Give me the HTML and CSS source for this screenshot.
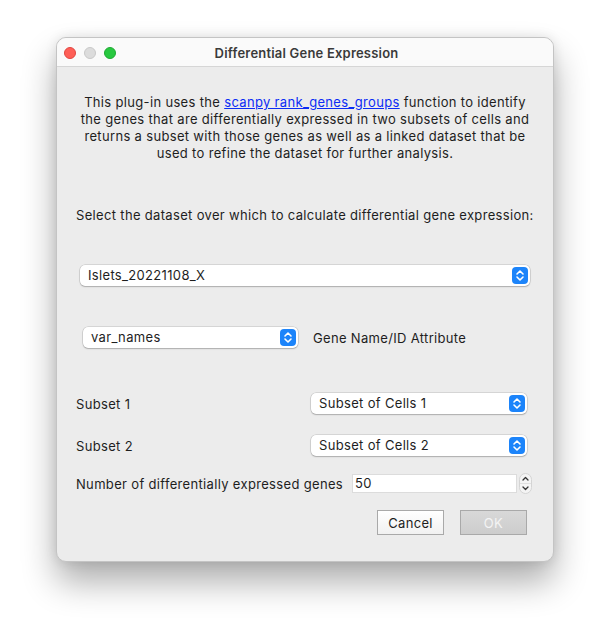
FILE: index.html
```html
<!DOCTYPE html>
<html>
<head>
<meta charset="utf-8">
<link rel="stylesheet" href="styles.css">
</head>
<body>
<div class="desktop">
<div class="window">
  <div class="titlebar">
    <div class="lights">
      <span class="light red"></span>
      <span class="light grey"></span>
      <span class="light green"></span>
    </div>
    <div class="title">Differential Gene Expression</div>
  </div>
  <div class="content">
    <p class="desc">This plug-in uses the <a href="#">scanpy rank_genes_groups</a> function to identify<br>the genes that are differentially expressed in two subsets of cells and<br>returns a subset with those genes as well as a linked dataset that be<br>used to refine the dataset for further analysis.</p>
    <p class="prompt">Select the dataset over which to calculate differential gene expression:</p>
    <div class="select wide">
      <span class="sel-text">Islets_20221108_X</span>
      <span class="stepper"><svg width="10" height="13" viewBox="0 0 10 13"><path d="M2 5 L5 2 L8 5 M2 8 L5 11 L8 8" fill="none" stroke="#fff" stroke-width="1.6" stroke-linecap="round" stroke-linejoin="round"/></svg></span>
    </div>
    <div class="row attr-row">
      <div class="select attr">
        <span class="sel-text">var_names</span>
        <span class="stepper"><svg width="10" height="13" viewBox="0 0 10 13"><path d="M2 5 L5 2 L8 5 M2 8 L5 11 L8 8" fill="none" stroke="#fff" stroke-width="1.6" stroke-linecap="round" stroke-linejoin="round"/></svg></span>
      </div>
      <span class="label attr-label">Gene Name/ID Attribute</span>
    </div>
    <div class="row subset-row first">
      <span class="label">Subset 1</span>
      <div class="select subset">
        <span class="sel-text">Subset of Cells 1</span>
        <span class="stepper"><svg width="10" height="13" viewBox="0 0 10 13"><path d="M2 5 L5 2 L8 5 M2 8 L5 11 L8 8" fill="none" stroke="#fff" stroke-width="1.6" stroke-linecap="round" stroke-linejoin="round"/></svg></span>
      </div>
    </div>
    <div class="row subset-row second">
      <span class="label">Subset 2</span>
      <div class="select subset">
        <span class="sel-text">Subset of Cells 2</span>
        <span class="stepper"><svg width="10" height="13" viewBox="0 0 10 13"><path d="M2 5 L5 2 L8 5 M2 8 L5 11 L8 8" fill="none" stroke="#fff" stroke-width="1.6" stroke-linecap="round" stroke-linejoin="round"/></svg></span>
      </div>
    </div>
    <div class="row num-row">
      <span class="label">Number of differentially expressed genes</span>
      <div class="num-input">50</div>
      <div class="spin">
        <svg width="13" height="21" viewBox="0 0 13 21"><rect x="0.5" y="0.5" width="12" height="20" rx="6" fill="#f4f4f4" stroke="#d4d4d4"/><line x1="1" y1="10.5" x2="12" y2="10.5" stroke="#e0e0e0"/><path d="M4 7 L6.5 4.5 L9 7 M4 14 L6.5 16.5 L9 14" fill="none" stroke="#333" stroke-width="1.3" stroke-linecap="round" stroke-linejoin="round"/></svg>
      </div>
    </div>
    <div class="buttons">
      <button class="btn cancel">Cancel</button>
      <button class="btn ok">OK</button>
    </div>
  </div>
</div>
</div>
</body>
</html>
```
FILE: styles.css
```css
html, body {
  margin: 0;
  padding: 0;
  background: #ffffff;
}
body {
  font-family: Inter, "Liberation Sans", Arial, sans-serif;
  font-size: 13px;
  letter-spacing: 0.33px;
  color: #1e1e1e;
}
.desktop {
  min-height: 635px;
  box-sizing: border-box;
  padding: 37px 0 0 56px;
}
.window {
  width: 498px;
  height: 525px;
  box-sizing: border-box;
  background: #ececec;
  border-radius: 10px;
  border: 1px solid #c4c4c4;
  box-shadow: 0 20px 34px rgba(0,0,0,0.32), 0 0 12px rgba(0,0,0,0.1);
  overflow: hidden;
}
.titlebar {
  height: 28px;
  background: #fafafa;
  border-bottom: 1px solid #d6d6d6;
  display: flex;
  align-items: center;
}
.lights {
  display: flex;
  gap: 8px;
  padding-left: 7px;
  padding-top: 1px;
}
.light {
  width: 12px;
  height: 12px;
  border-radius: 50%;
  box-sizing: border-box;
}
.red { background: #fe5f57; border: 0.5px solid #e14640; }
.grey { background: #dcdcdc; border: 0.5px solid #c8c8c8; }
.green { background: #28c840; border: 0.5px solid #1eaa32; }
.title {
  flex: 1;
  text-align: center;
  font-weight: 600;
  font-size: 13px;
  letter-spacing: 0.2px;
  color: #3a3a3a;
  margin-left: -56px;
  padding-top: 1px;
}
.content {
  padding: 0 19px;
  display: flex;
  flex-direction: column;
}
.desc {
  margin: 27px 0 0 0;
  text-align: center;
  line-height: 17px;
  white-space: nowrap;
}
.desc a {
  color: #0b2df5;
  text-decoration: underline;
}
.prompt {
  margin: 45px 0 0 0;
  line-height: 17px;
  white-space: nowrap;
}
.select {
  height: 21px;
  box-sizing: border-box;
  background: #ffffff;
  border-radius: 5px;
  box-shadow: 0 0 0 0.5px rgba(0,0,0,0.18), 0 1px 1.5px rgba(0,0,0,0.2);
  display: flex;
  align-items: center;
  justify-content: space-between;
  padding: 0 2px 0 8px;
}
.sel-text {
  line-height: 21px;
}
.stepper {
  width: 16px;
  height: 17px;
  background: #1c84fa;
  border-radius: 4px;
  display: flex;
  align-items: center;
  justify-content: center;
}
.wide {
  margin: 41px 0 0 4px;
  width: 450px;
}
.row {
  display: flex;
  align-items: center;
  white-space: nowrap;
}
.attr-row {
  margin-top: 41px;
}
.attr {
  width: 215px;
  margin-left: 7px;
}
.attr-label {
  margin-left: 15px;
}
.subset-row {
  justify-content: space-between;
  padding-right: 7px;
}
.subset-row.first { margin-top: 45px; }
.subset-row.second { margin-top: 21px; }
.subset {
  width: 216px;
}
.num-row {
  margin-top: 17px;
  height: 21px;
}
.num-input {
  margin-left: 9px;
  width: 165px;
  height: 19px;
  box-sizing: border-box;
  background: #ffffff;
  border: 1px solid #dcdcdc;
  padding-left: 2px;
  line-height: 17px;
}
.spin {
  margin-left: 2px;
  display: flex;
}
.buttons {
  display: flex;
  justify-content: flex-end;
  gap: 16px;
  margin-top: 16px;
  padding-right: 7px;
}
.btn {
  width: 67px;
  height: 25px;
  box-sizing: border-box;
  font-family: Inter, "Liberation Sans", Arial, sans-serif;
  font-size: 13px;
  letter-spacing: 0.33px;
  border: 1px solid #a9a9a9;
  border-radius: 0;
  padding: 0;
}
.cancel {
  background: linear-gradient(#ffffff, #f1f1f1);
  color: #1e1e1e;
}
.ok {
  background: linear-gradient(#d8d8d8, #cdcdcd);
  color: #f4f4f4;
}
```
